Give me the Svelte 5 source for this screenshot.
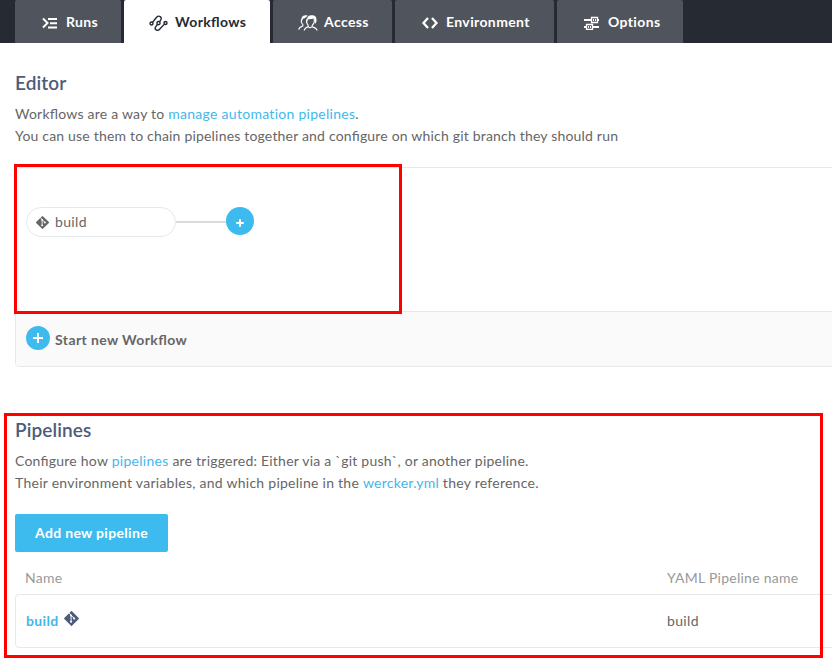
<script>
  const tabs = [
    { name: 'Runs', icon: 'runs', width: 106, pad: 27, gap: 8 },
    { name: 'Workflows', icon: 'flow', width: 146, pad: 25, gap: 7 },
    { name: 'Access', icon: 'people', width: 119, pad: 25, gap: 6 },
    { name: 'Environment', icon: 'code', width: 159, pad: 26, gap: 7 },
    { name: 'Options', icon: 'options', width: 126, pad: 27, gap: 8 }
  ];
  const active = 'Workflows';
</script>

{#snippet icon(kind)}
  {#if kind === 'runs'}
    <svg width="16" height="14" viewBox="0 0 16 14" fill="none" stroke="currentColor" stroke-width="2"><path d="M1 2.5 5.5 7 1 11.5M6 3h9M8 7.3h7M6 11.5h9" /></svg>
  {:else if kind === 'flow'}
    <svg width="19" height="18" viewBox="0 0 19 18" fill="none" stroke="currentColor" stroke-width="1.4"><circle cx="2.5" cy="9.5" r="1.5" /><circle cx="16.5" cy="9" r="1.5" /><path d="M3.6 8.3 7.6 3.3c2.2-2.6 6-.2 4.2 2.5L10.6 7.7M8.4 10.5l-1.8 2.3c-1.6 2.6 1.8 4.9 4 2.5l4.8-5.2" /><circle cx="9.5" cy="9.1" r="1.6" /></svg>
  {:else if kind === 'people'}
    <svg width="20" height="18" viewBox="0 0 20 18" fill="none" stroke="currentColor" stroke-width="1.1"><path d="M.7 15.6c.2-2.1 1.5-2.6 4.1-3.6v-1.6C2.8 8.5 3 6.6 4 4.9 4 2.3 6.3 1.3 9.4 2M6.2 16.5c.2-2.2 1.5-2.8 3.9-3.7v-1.7C8.2 8.8 8.1 6.7 9.2 4.7M14.2 11v1.8c2.5.9 4.6 1.3 4.9 3.7M10.2 12.7c1.1 1.3 2.8 1.3 4 0M14.2 11.2c1.6-1.3 2.6-3.5 1.8-5.8" /><path d="M9 5.7c.2-3.2 2.2-4.5 4.5-4.4 2.7-.4 5.1 1 5 4.5.1 2.2-.6 3.4-1.2 4.1-.1-2-.5-4.3-2-5.5-1.6.9-3.7.4-5.4 1.1L8.8 9z" fill="currentColor" stroke="none" /><path d="M4 5.3C4.4 2.2 6.7 1.4 9.5 1.8 8 2.6 8.1 4 6.5 4.3 5 4.5 4.6 5.2 4.4 7z" fill="currentColor" stroke="none" /></svg>
  {:else if kind === 'code'}
    <svg width="18" height="14" viewBox="0 0 18 14" fill="none" stroke="currentColor" stroke-width="2.3"><path d="M7 2 2.5 7 7 12M11 2l4.5 5L11 12" /></svg>
  {:else}
    <svg width="16" height="14" viewBox="0 0 16 14" fill="none" stroke="currentColor"><path d="M0 4h7M13 4h2M0 11h2M9 11h6" stroke-width="2" /><path d="M7.5 1.5h6v5h-6zM2.5 8.5h6v5h-6z" stroke-width="1.3" /><path d="M9.5 3v2M11.5 3v2M4.5 10v2M6.5 10v2" /></svg>
  {/if}
{/snippet}

{#snippet git(size)}
  <svg class="git" width={size} height={size} viewBox="0 0 16 16"><rect x="2.9" y="2.9" width="10.2" height="10.2" rx=".6" transform="rotate(45 8 8)" fill="currentColor" /><path d="M5.4 2.6 7.6 4.8v6.4M7.6 5l3 2.8" fill="none" stroke="#fff" stroke-width=".9" /><circle cx="7.6" cy="11" r="1" fill="#fff" /><circle cx="7.6" cy="5.2" r=".9" fill="#fff" /><circle cx="10.5" cy="8" r="1" fill="#fff" /></svg>
{/snippet}

<div class="page">
  <nav>
    {#each tabs as tab}
      <div class="tab" class:active={tab.name === active} style:width="{tab.width}px" style:padding-left="{tab.pad}px" style:gap="{tab.gap}px">
        {@render icon(tab.icon)}<span>{tab.name}</span>
      </div>
    {/each}
  </nav>

  <main>
    <section>
      <h2>Editor</h2>
      <p>Workflows are a way to <a class="wide" href="#pipelines">manage automation pipelines</a>.<br /><span class="tight">You can use them to chain pipelines together and configure on which git branch they should run</span></p>
      <div class="editor">
        <div class="canvas">
          <div class="node">{@render git(15)}<span>build</span></div>
          <div class="link"></div>
          <div class="plus big"><svg width="8" height="8" viewBox="0 0 8 8"><path d="M4 .2v7.6M.2 4h7.6" stroke="#fff" stroke-width="2" /></svg></div>
        </div>
        <div class="start">
          <div class="plus"><svg width="10" height="10" viewBox="0 0 10 10"><path d="M5 0v10M0 5h10" stroke="#fff" stroke-width="2" /></svg></div>
          <span>Start new Workflow</span>
        </div>
      </div>
    </section>

    <section class="pipelines" id="pipelines">
      <h2>Pipelines</h2>
      <p>Configure how <a class="wide" href="#pipelines">pipelines</a> are triggered: Either via a `git push`, or another pipeline.<br /><span class="mid">Their environment variables, and which pipeline in the <a href="#pipelines">wercker.yml</a> they reference.</span></p>
      <button>Add new pipeline</button>
      <div class="row head"><span>Name</span><span>YAML Pipeline name</span></div>
      <div class="row body"><span class="name"><b>build</b>{@render git(17)}</span><span>build</span></div>
    </section>
  </main>

  <div class="mark first"></div>
  <div class="mark second"></div>
</div>

<style>
  :global(body) { background: #fff; overflow: hidden; }
  .page { position: relative; width: 832px; height: 662px; overflow: hidden; font: 14px/22px Lato, sans-serif; letter-spacing: .23px; color: #666; white-space: nowrap; }
  .page * { box-sizing: border-box; }
  svg { display: block; flex: none; }
  nav { display: flex; gap: 3px; height: 43px; padding-left: 15px; background: #252a33; }
  .tab { display: flex; align-items: center; height: 43px; background: #50555d; color: #fff; font-weight: 700; letter-spacing: .37px; border-radius: 2px 2px 0 0; }
  .tab svg { margin-top: 2px; }
  .active { background: #fff; color: #252a33; }
  .active, .start, p { font-feature-settings: "liga" 1; }
  main { padding: 28px 0 0 15px; }
  h2 { margin: 0; font-size: 19px; line-height: 24px; font-weight: 600; letter-spacing: .1px; color: #4d5c7a; }
  p { margin: 8px 0 0; }
  a { color: #41b8ec; text-decoration: none; font-feature-settings: normal; }
  .wide { letter-spacing: .28px; }
  .mid { letter-spacing: .26px; }
  .tight { letter-spacing: .19px; }
  .editor { width: 840px; height: 200px; margin-top: 20px; border: 1px solid #e6e9e9; border-radius: 4px; overflow: hidden; }
  .canvas { display: flex; align-items: center; height: 143px; padding: 0 0 35px 10px; }
  .node { display: flex; align-items: center; gap: 5px; width: 150px; height: 30px; padding-left: 8px; border: 1px solid #e6e9e9; border-radius: 15px; letter-spacing: .35px; }
  .link { width: 50px; height: 2px; background: #d9dcdc; }
  .plus { display: flex; align-items: center; justify-content: center; width: 24px; height: 24px; border-radius: 50%; background: #3dbbee; }
  .big { width: 28px; height: 28px; margin-bottom: 2px; padding-top: 3px; }
  .start { display: flex; align-items: center; gap: 5px; height: 55px; padding: 0 0 2px 10px; border-top: 1px solid #e6e9e9; background: #fafafa; font-weight: 700; letter-spacing: .4px; }
  .start span { padding-top: 3px; }
  .pipelines { margin-top: 51px; }
  button { display: block; width: 153px; height: 38px; margin-top: 20px; padding: 0; border: 0; border-radius: 2px; background: #3dbbee; color: #fff; font: inherit; font-weight: 700; letter-spacing: .32px; }
  .row { display: grid; grid-template-columns: 642px 1fr; align-items: center; width: 840px; }
  .head { height: 42px; padding: 9px 0 0 10px; color: #999; letter-spacing: .26px; }
  .body { height: 54px; padding-left: 10px; border: 1px solid #e6e9e9; border-radius: 4px; letter-spacing: .35px; }
  .row.body { grid-template-columns: 641px 1fr; }
  .name { display: flex; gap: 4px; color: #41b8ec; }
  .name :global(.git) { color: #4d5c7a; }
  .mark { position: absolute; border: 3px solid red; pointer-events: none; }
  .first { left: 14px; top: 164px; width: 388px; height: 150px; }
  .second { left: 4px; top: 413px; width: 819px; height: 245px; }
</style>
